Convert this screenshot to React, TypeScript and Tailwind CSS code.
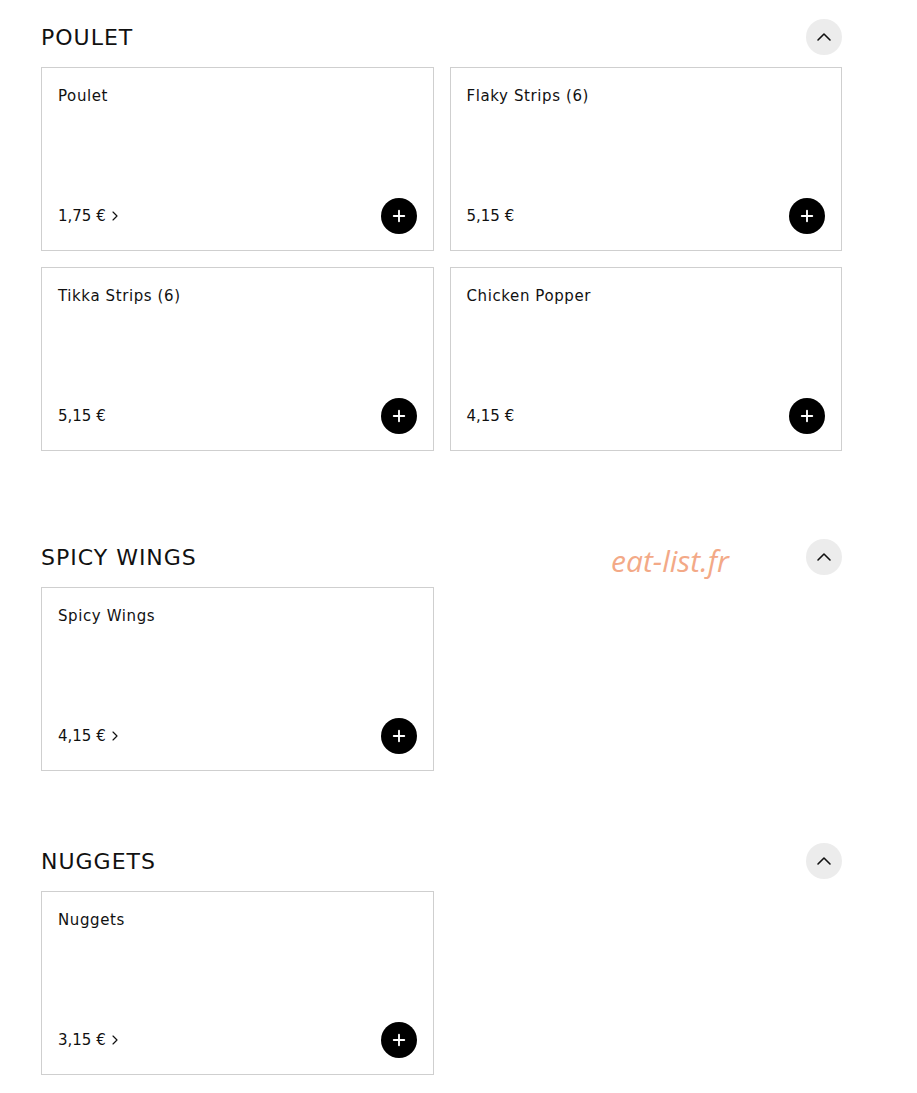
import { ChevronUp, ChevronRight, Plus } from "lucide-react";

interface Item {
  name: string;
  price: string;
  options?: boolean;
}

interface Section {
  title: string;
  items: Item[];
  className: string;
}

const sections: Section[] = [
  {
    title: "POULET",
    className: "pt-[19px]",
    items: [
      { name: "Poulet", price: "1,75 €", options: true },
      { name: "Flaky Strips (6)", price: "5,15 €" },
      { name: "Tikka Strips (6)", price: "5,15 €" },
      { name: "Chicken Popper", price: "4,15 €" },
    ],
  },
  {
    title: "SPICY WINGS",
    className: "pt-[88px]",
    items: [{ name: "Spicy Wings", price: "4,15 €", options: true }],
  },
  {
    title: "NUGGETS",
    className: "pt-[72px]",
    items: [{ name: "Nuggets", price: "3,15 €", options: true }],
  },
];

function ItemCard({ item }: { item: Item }) {
  return (
    <div className="h-[184px] border border-[#cfcfcf] bg-white flex flex-col justify-between pl-[16px] pr-4 pt-[16px] pb-4">
      <h3 className="text-[15px] leading-[24px] tracking-[0.6px] text-[#111]">{item.name}</h3>
      <div className="flex items-center justify-between">
        <span className="flex items-center text-[15px] text-[#111]">
          {item.price}
          {item.options && <ChevronRight size={16} strokeWidth={1.75} className="ml-[1px]" />}
        </span>
        <button className="w-9 h-9 rounded-full bg-black text-white flex items-center justify-center">
          <Plus size={18} strokeWidth={2.5} />
        </button>
      </div>
    </div>
  );
}

export default function App() {
  return (
    <div
      className="relative bg-white min-h-[1093px] pb-[18px]"
      style={{ fontFamily: '"DejaVu Sans", "Open Sans", sans-serif' }}
    >
      <div className="ml-[41px] w-[801px]">
        {sections.map((section) => (
          <section key={section.title} className={section.className}>
            <div className="flex items-center justify-between h-9 mb-3">
              <h2 className="text-[22px] tracking-[1px] text-[#111]">{section.title}</h2>
              <button className="w-9 h-9 rounded-full bg-[#ececec] flex items-center justify-center text-[#111]">
                <ChevronUp size={24} strokeWidth={1.6} />
              </button>
            </div>
            <div className="grid grid-cols-2 gap-4">
              {section.items.map((item) => (
                <ItemCard key={item.name} item={item} />
              ))}
            </div>
          </section>
        ))}
      </div>
      <span
        className="absolute left-[611px] top-[538px] text-[30px] italic text-[#f3a987]"
        style={{ fontFamily: '"Open Sans", sans-serif' }}
      >
        eat-list.fr
      </span>
    </div>
  );
}
